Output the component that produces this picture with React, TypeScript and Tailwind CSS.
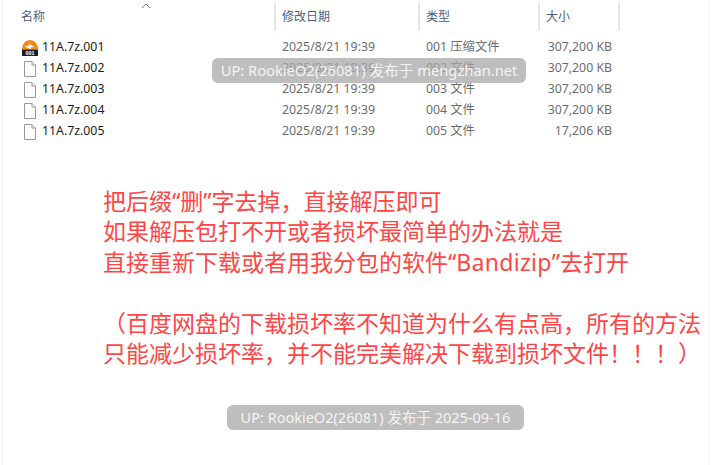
const files = [
  { name: "11A.7z.001", type: "001 压缩文件", size: "307,200 KB" },
  { name: "11A.7z.002", type: "002 文件", size: "307,200 KB" },
  { name: "11A.7z.003", type: "003 文件", size: "307,200 KB" },
  { name: "11A.7z.004", type: "004 文件", size: "307,200 KB" },
  { name: "11A.7z.005", type: "005 文件", size: "17,206 KB" },
];

function BlankFileIcon() {
  return (
    <svg width="14" height="16" viewBox="0 0 14 16" className="shrink-0">
      <path d="M1.5 0.5H9L12.5 4V15.5H1.5Z" fill="#fcfcfc" stroke="#9a9a9a" />
      <path d="M9 0.5V4H12.5" fill="#f0f0f0" stroke="#9a9a9a" />
    </svg>
  );
}

function BandizipIcon() {
  return (
    <svg width="16" height="16" viewBox="0 0 16 16" className="shrink-0">
      <path d="M0 9.5C0 4 3.5 0 8 0S16 4 16 9.5Z" fill="#f08a1d" />
      <path d="M2.5 6.5L7.5 5.5L6.5 3.5L12.5 7L8.5 7.5L9.5 9.5Z" fill="#ffffff" />
      <rect x="0" y="9.5" width="16" height="6.5" fill="#1c1c1c" />
      <text x="8" y="15" textAnchor="middle" fontSize="5.5" fontWeight="700" fill="#ffffff" fontFamily="Liberation Sans, sans-serif">
        001
      </text>
    </svg>
  );
}

function Watermark({ text, className }: { text: string; className: string }) {
  return (
    <div className={`absolute h-[25px] rounded-[6px] bg-[#a8a8a8]/75 text-[#f4f4f4] flex items-center justify-center whitespace-nowrap ${className}`}>
      {text}
    </div>
  );
}

export default function App() {
  return (
    <div className="relative w-[716px] h-[465px] overflow-hidden bg-white font-['Noto_Sans','Noto_Sans_CJK_SC',sans-serif]">
      <div className="mx-[2px] w-[707px] h-full border-x border-[#f2f2f2]">
        <div className="flex h-[31px] pt-[3px] text-[12px] text-[#4c607a]">
          <div className="relative w-[273px] border-r-2 border-[#e5e5e5] pl-[18px] leading-[27px]">
            名称
            <svg width="10" height="6" viewBox="0 0 10 6" className="absolute left-[138px] top-[0px]">
              <path d="M1 5L5 1L9 5" fill="none" stroke="#777777" />
            </svg>
          </div>
          <div className="w-[144px] border-r-2 border-[#e5e5e5] pl-[6px] leading-[27px]">修改日期</div>
          <div className="w-[120px] border-r-2 border-[#e5e5e5] pl-[6px] leading-[27px]">类型</div>
          <div className="w-[80px] border-r-2 border-[#e5e5e5] pl-[6px] leading-[27px]">大小</div>
        </div>

        <div className="pt-[6px] text-[12.3px] text-[#6d6d6d]">
          {files.map((file, i) => (
            <div key={file.name} className="flex items-center h-[21px]">
              <div className="flex items-center w-[273px] pl-[19px]">
                <span className="flex justify-center w-[16px]">{i === 0 ? <BandizipIcon /> : <BlankFileIcon />}</span>
                <span className="ml-[4px] text-[#1a1a1a]">{file.name}</span>
              </div>
              <div className="w-[144px] pl-[6px]">2025/8/21 19:39</div>
              <div className="w-[108px] pl-[6px]">{file.type}</div>
              <div className="w-[84px] text-right">{file.size}</div>
            </div>
          ))}
        </div>

        <div className="pt-[44px] pl-[100px] text-[23px] leading-[30.4px] text-[#ff4545] whitespace-nowrap">
          <div className="h-[30.4px]">把后缀“删”字去掉，直接解压即可</div>
          <div className="h-[30.4px]">如果解压包打不开或者损坏最简单的办法就是</div>
          <div className="h-[30.4px]">
            直接重新下载或者用我分包的软件“<span className="tracking-[0.3px]">Bandizip</span>”去打开
          </div>
          <div className="h-[30.4px]" />
          <div className="h-[30.4px]">（百度网盘的下载损坏率不知道为什么有点高，所有的方法</div>
          <div className="h-[30.4px]">只能减少损坏率，并不能完美解决下载到损坏文件！！！）</div>
        </div>
      </div>

      <Watermark text="UP: RookieO2(26081) 发布于 mengzhan.net" className="left-[212px] top-[58px] w-[314px] text-[14.7px]" />
      <Watermark text="UP: RookieO2(26081) 发布于 2025-09-16" className="left-[227px] top-[405px] w-[297px] text-[14.5px]" />
    </div>
  );
}
